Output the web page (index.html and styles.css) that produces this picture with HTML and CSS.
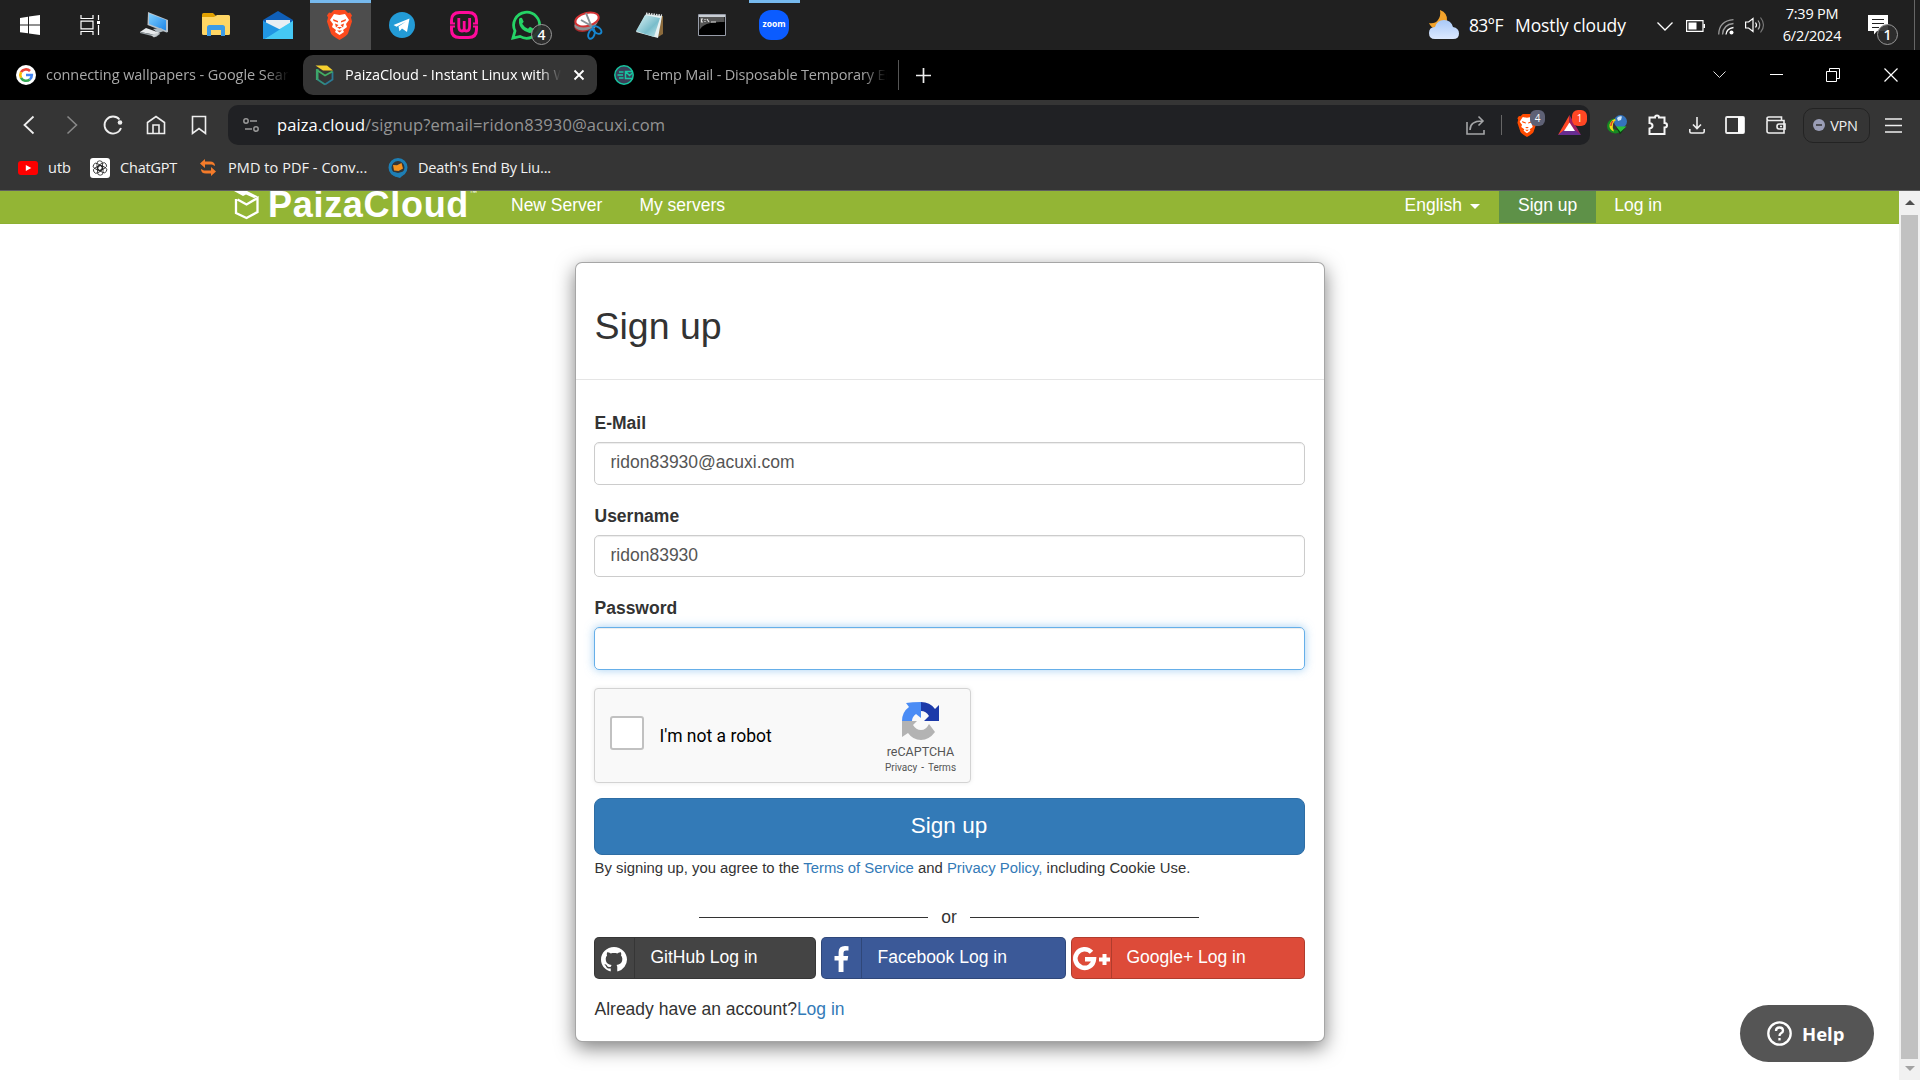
FILE: index.html
```html
<!DOCTYPE html>
<html lang="en">
<head>
<meta charset="utf-8">
<title>PaizaCloud - Instant Linux with Web browser</title>
<link rel="stylesheet" href="styles.css">
</head>
<body>
<div class="taskbar">
  <div class="task start"><svg width="20" height="20" viewBox="0 0 20 20"><path fill="#fff" d="M0 3l8-1.2V9.500H0zM9 1.600L20 0v9.500H9zM0 10.500h8v7.800L0 17.200zM9 10.500h11V20L9 18.500z"/></svg></div>
  <div class="task view"><svg width="21" height="20" viewBox="0 0 21 20" fill="none" stroke="#fff" stroke-width="1.200"><path d="M1 0v3.500h12V0M1 20v-3.500h12V20M1 6.200h12v7.600H1zM18.500 0v5M18.500 10v10"/><path fill="#fff" stroke="none" d="M17 6h3v3h-3z"/></svg></div>
  <div class="task"><svg width="28" height="27" viewBox="0 0 28 27"><defs><linearGradient id="pc" x2="1" y2="1"><stop stop-color="#7fd0ff"/><stop offset="1" stop-color="#1e86e8"/></linearGradient></defs><path fill="#b9c2c9" d="M8 0l20 8v12l-1.500.5L7.500 13z"/><path fill="url(#pc)" d="M9 1.500L26 8v10.500L9 12z"/><path fill="#aeb9c0" d="M13 17l8-1 3 3-6 2z"/><path fill="#e6e9eb" d="M6 16l14 5-4 2-16-3z"/><path fill="#9aa3a8" d="M0 20l16 3 4-2v1l-4 3L0 21z"/><path fill="#c9cfd2" d="M11 23l6-2 2 1-5 3.500z"/></svg></div>
  <div class="task"><svg width="28" height="24" viewBox="0 0 28 24"><path fill="#e2a100" d="M0 1.500Q0 0 1.500 0H11l3 3-2 2H0z"/><path fill="#ffd664" d="M0 4h12l3-2h11.500Q28 2 28 3.500v17q0 1.500-1.500 1.500h-25Q0 22 0 20.500z"/><path fill="#3c9be6" d="M5 14.500Q5 12 7.500 12h13q2.500 0 2.500 2.500V23h-4v-6H9v6H5z"/></svg></div>
  <div class="task"><svg width="30" height="28" viewBox="0 0 30 28"><path fill="#0f5fb8" d="M0 9L15 0l15 9v4H0z"/><path fill="#e9eef3" d="M3 9h24v14H3z"/><path fill="#2ea7ec" d="M0 10l15 10L0 28z"/><path fill="#50cff7" d="M30 10L0 28h30z"/><path fill="#2196e3" d="M0 10l18 9L2 28H0z"/><path fill="#45c8f4" d="M30 10v18H2z"/></svg></div>
  <div class="task active"><svg width="25" height="30" viewBox="0 0 25 30"><path fill="#fb4a1e" d="M7 0h11l3 3 2-.5 2 3-1 2 1 4-4 12q-1 2-8.500 6.500Q5 25.500 4 23.500L0 11.500l1-4-1-2 2-3L4 3z"/><path fill="#fff" d="M7 4l5.500 1L18 4l4 6-3 4 1 3-4 3 1 2-4.500 3L8 22l1-2-4-3 1-3-3-4z"/><path fill="#fb4a1e" d="M6 9l5 2v1.500L6.500 11zM19 9l-5 2v1.500l4.500-1.500zM10 17h5l-2.500 2zM8 13.500l3.500 1.500L9 17.500zM17 13.500L13.500 15l2.500 2.500zM10 20.500l2.500 2 2.500-2z"/></svg></div>
  <div class="task"><svg width="26" height="26" viewBox="0 0 26 26"><circle cx="13" cy="13" r="13" fill="#239bd6"/><path fill="#fff" d="M4.500 13L20.500 6.500 18 20l-5-3.500-2.500 2.800-1-4.800L17 9.500l-9.500 5.200z"/></svg></div>
  <div class="task"><svg width="28" height="28" viewBox="0 0 28 28" fill="none" stroke="#ff0a9b" stroke-width="3"><path d="M1.500 12V9.500q0-8 8-8h9q8 0 8 8V12M26.500 16v2.500q0 8-8 8h-9q-8 0-8-8V16"/><path stroke-width="2" d="M0 12.500h5M0 15.500h5M23 12.500h5M23 15.500h5"/><path stroke-width="2.800" d="M8.800 7v8.500q0 4.500 3.200 4.500 2.200 0 2.200-2.500V10v7.500q0 2.500 2.200 2.500 3.200 0 3.200-4.500V7"/></svg></div>
  <div class="task badge-host"><svg width="30" height="30" viewBox="0 0 30 30"><path fill="none" stroke="#25d366" stroke-width="2.800" d="M2 28l2-7A13 13 0 1 1 9 26.400z"/><path fill="#25d366" d="M8 9q1.500-2 3-1l1.700 3.800-1.500 2q2 3.500 5.800 5l2-2L23 19q0 4-4.500 4Q9 20.500 8 13z"/></svg><span class="sys-badge whats">4</span></div>
  <div class="task"><svg width="28" height="29" viewBox="0 0 28 29"><ellipse cx="11" cy="14" rx="11" ry="6.500" fill="#a92a2b" transform="rotate(-15 11 14)"/><ellipse cx="12" cy="12" rx="12" ry="7" fill="#8d9294" transform="rotate(-15 12 12)"/><ellipse cx="13" cy="8.500" rx="12" ry="6.500" fill="#fff" stroke="#d33334" stroke-width="2" transform="rotate(-15 13 8.500)"/><path stroke="#899095" stroke-width="2" d="M12 2l6 15M7 9l14 8"/><g fill="none" stroke="#1686d0" stroke-width="2"><ellipse cx="17.500" cy="23" rx="3" ry="5" transform="rotate(20 17.500 23)"/><ellipse cx="23" cy="19" rx="3" ry="5" transform="rotate(-55 23 19)"/></g></svg></div>
  <div class="task"><svg width="28" height="27" viewBox="0 0 28 27"><defs><linearGradient id="np" x2="1" y2="1"><stop stop-color="#dff4f6"/><stop offset=".6" stop-color="#79bdcb"/><stop offset="1" stop-color="#c5e6ea"/></linearGradient></defs><path fill="#8c6b3c" d="M24 4h3v18l-5 3z"/><path fill="#e6f1f2" d="M10 2l16 2-4 22L0 20z"/><path fill="url(#np)" d="M9 3l15 3-6 19L0 19z"/><path stroke="#dce1e3" stroke-width="2" stroke-dasharray="1.500 1" d="M10 1.500l16 2"/></svg></div>
  <div class="task"><svg width="28" height="22" viewBox="0 0 28 22"><path fill="#000" stroke="#979ca8" d="M.5.500h27v21H.5z"/><path fill="#c9ced4" d="M1 1h26v2H1z"/><path fill="#555" d="M1.500 3h25v5Q6 7 1.500 16z"/><path stroke="#ddd" stroke-width="1.200" fill="none" d="M5 5H3.500v3H5M7 5v1M7 7v1M9 5l2 3M13 8h5"/></svg></div>
  <div class="task zoom-app"><span class="zoom-logo">zoom</span></div>
  <div class="tray">
    <svg class="weather" width="30" height="30" viewBox="0 0 30 30"><defs><linearGradient id="cl" x2="0" y2="1"><stop stop-color="#a9c9f8"/><stop offset="1" stop-color="#dce9ff"/></linearGradient></defs><path fill="#f3a32b" d="M11 0q8 3 7 11-2 8-11 8-5-1-7-6 6 1 9-3t2-10z"/><path fill="url(#cl)" d="M6 29q-6 0-6-6t6-6q2-7 9-7t9 7q6 1 6 6.500T24 29z"/></svg>
    <span class="temp">83°F</span><span class="sky">Mostly cloudy</span>
    <svg class="t-chev" width="16" height="9" viewBox="0 0 16 9" fill="none" stroke="#fff" stroke-width="1.300"><path d="M.5.500L8 8l7.500-7.500"/></svg>
    <svg class="t-bat" width="19" height="12" viewBox="0 0 19 12"><path fill="none" stroke="#fff" stroke-width="1.200" d="M.6.600H17v10.800H.6z"/><path fill="#fff" d="M2.500 2.500h8v7h-8zM17.500 4H19v4h-1.500z"/></svg>
    <svg class="t-wifi" width="16" height="16" viewBox="0 0 16 16" fill="none" stroke="#999" stroke-width="1.300"><path d="M.7 15.500Q1 2 15.500.700M4.500 15.500Q5 5.500 15.500 4.500" /><path stroke="#fff" d="M8 15.500q.5-6 7.500-7"/><circle cx="13.500" cy="13.500" r="2" fill="#fff" stroke="none"/></svg>
    <svg class="t-vol" width="20" height="18" viewBox="0 0 20 18" fill="none" stroke="#fff" stroke-width="1.200"><path d="M.6 6h3L8 2.500v13L3.600 12h-3zM10.500 6.500q2 2.500 0 5"/><path stroke="#aaa" d="M13 4.500q3.500 4.500 0 9"/><path stroke="#777" d="M15.500 1.500q6 7.500 0 15"/></svg>
    <div class="clock"><span>7:39 PM</span><span>6/2/2024</span></div>
    <div class="notif badge-host"><svg width="20" height="20" viewBox="0 0 20 20"><path fill="#fff" d="M0 0h20v16H9l-3 3.500V16H0z"/><path stroke="#202020" stroke-width="1.200" d="M4 4.500h12M4 8.500h12M4 12.500h7"/></svg><span class="sys-badge note">1</span></div>
    <i class="peek"></i>
  </div>
</div>

<div class="tabs">
  <div class="tab first">
    <svg width="20" height="20" viewBox="0 0 20 20"><circle cx="10" cy="10" r="10" fill="#fff"/><g fill="none" stroke-width="2.600"><path stroke="#ea4335" d="M5 7.200A5.800 5.800 0 0 1 14 6"/><path stroke="#fbbc05" d="M5 12.800a6 6 0 0 1 0-5.600"/><path stroke="#34a853" d="M5 12.800a5.800 5.800 0 0 0 8.800 1.600"/><path stroke="#4285f4" d="M10 10h5.800q0 3-2 4.600"/></g></svg>
    <span class="tab-text w1">connecting wallpapers - Google Search</span>
  </div>
  <div class="tab current">
    <svg width="20" height="21" viewBox="0 0 20 21" fill="none" stroke-width="1.800"><path stroke="#3ca56c" stroke-width="2.600" d="M2.200 4v11"/><path stroke="#338f80" d="M2.500 14.500L10 19.500"/><path stroke="#2b7a94" d="M10 19.500l7.500-5V6.500"/><path stroke="#44ad62" d="M2.500 5.500L10 10.500l7.500-4"/><path fill="#f5cf2e" d="M.5.500h11.500l6 5H8z"/></svg>
    <span class="tab-text w2">PaizaCloud - Instant Linux with Web</span>
    <svg class="tab-x" width="10" height="10" viewBox="0 0 10 10" stroke="#fff" stroke-width="1.800"><path d="M.5.500l9 9M9.500.500l-9 9"/></svg>
  </div>
  <div class="tab third">
    <svg width="20" height="20" viewBox="0 0 20 20" fill="none" stroke="#17c6a0" stroke-width="1.500"><circle cx="10" cy="10" r="9.200" fill="#3b3f58"/><path d="M19 6.500h-7.500v7H19M11.500 6.500l4 4 3.500-3M5 7h4.500M3.500 10H9M5 13h4.500"/></svg>
    <span class="tab-text w3">Temp Mail - Disposable Temporary Email</span>
  </div>
  <i class="tab-sep"></i>
  <svg class="plus" width="15" height="15" viewBox="0 0 15 15" stroke="#eee" stroke-width="1.700"><path d="M7.500 0v15M0 7.500h15"/></svg>
  <div class="window-buttons">
    <svg width="13" height="8" viewBox="0 0 13 8" fill="none" stroke="#ddd"><path d="M.5.500l6 6 6-6"/></svg>
    <svg width="13" height="2" viewBox="0 0 13 2"><path fill="#fff" d="M0 0h13v1H0z"/></svg>
    <svg width="14" height="14" viewBox="0 0 14 14" fill="none" stroke="#fff"><path d="M.5 3.500h10v10H.5zM3.500 3.500v-3h10v10h-3"/></svg>
    <svg width="14" height="14" viewBox="0 0 14 14" stroke="#fff" stroke-width="1.200"><path d="M.5.500l13 13M13.500.500l-13 13"/></svg>
  </div>
</div>

<div class="toolbar">
  <div class="nav-icons">
    <svg width="12" height="18" viewBox="0 0 12 18" fill="none" stroke="#eee" stroke-width="1.800"><path d="M10.500.500L1.500 9l9 8.500"/></svg>
    <svg width="12" height="18" viewBox="0 0 12 18" fill="none" stroke="#888" stroke-width="1.600"><path d="M1.500.500l9 8.500-9 8.500"/></svg>
    <svg width="20" height="20" viewBox="0 0 20 20" fill="none" stroke="#eee" stroke-width="1.800"><path d="M16.500 4.500A8.500 8.500 0 1 0 18 13"/><circle cx="17" cy="7.500" r="2.300" fill="#eee" stroke="none"/></svg>
    <svg width="20" height="20" viewBox="0 0 20 20" fill="none" stroke="#eee" stroke-width="1.600"><path d="M1.500 7.500L10 1.500l8.500 6v11h-17zM7 18v-8h6v8"/></svg>
    <svg width="16" height="20" viewBox="0 0 16 20" fill="none" stroke="#eee" stroke-width="1.600"><path d="M1.500 18.500v-17h13v17L8 13.500z"/></svg>
  </div>
  <div class="address">
    <svg width="16" height="14" viewBox="0 0 16 14" fill="none" stroke="#999" stroke-width="1.500"><circle cx="3" cy="3" r="2.200"/><circle cx="13" cy="11" r="2.200"/><path d="M7 3h7M2 11h7"/></svg>
    <span class="url"><b>paiza.cloud</b>/signup?email=ridon83930@acuxi.com</span>
    <svg class="share" width="20" height="20" viewBox="0 0 20 20" fill="none" stroke="#a4a5a7" stroke-width="1.600"><path d="M1 7v12h17v-4M4 15q0-9 12-9M12.500 1.500L17 6l-4.500 4.500"/></svg>
    <i class="a-sep"></i>
    <div class="shield badge-host"><svg width="20" height="23" viewBox="0 0 25 30"><path fill="#ff4b00" d="M7 0h11l3 3 2-.5 2 3-1 2 1 4-4 12q-1 2-8.500 6.500Q5 25.500 4 23.500L0 11.500l1-4-1-2 2-3L4 3z"/><path fill="#fff" d="M7 4l5.500 1L18 4l4 6-3 4 1 3-4 3 1 2-4.500 3L8 22l1-2-4-3 1-3-3-4z"/><path fill="#ff4b00" d="M6 9l5 2v1.500L6.500 11zM19 9l-5 2v1.500l4.500-1.500zM10 17h5l-2.500 2zM10 20.500l2.500 2 2.500-2z"/></svg><span class="count gray">4</span></div>
    <div class="bat badge-host"><svg width="23" height="20" viewBox="0 0 23 20"><path fill="#ff4724" d="M11.500 0L0 20l11.500-7z"/><path fill="#9e1f63" d="M11.500 0L23 20l-11.500-7z"/><path fill="#662d91" d="M0 20l6-5h11l6 5z"/><path fill="#fff" d="M11.500 7.500L6 16h11z"/></svg><span class="count red">1</span></div>
  </div>
  <div class="extensions">
    <svg width="20" height="20" viewBox="0 0 20 20"><circle cx="13.500" cy="6.500" r="6.500" fill="#3473bd"/><path fill="#cfe6f6" d="M10 3q2-2.500 5-1.500l-1 3.500-3 1z"/><path fill="#168a22" d="M8 3Q0 5 0 11q0 6 8 7.500 4 0 6-3.500-8 1-9-4-.5-4 3-8z"/><path fill="#f4dd18" d="M7.500 4Q2 7 2.500 11.500 3 15 7 16.500 5 13 6 9q1-3 3-4z"/><path fill="#de3b2a" d="M5 6q-2 2-1.800 5h1.300q.3-3 2-5z"/><path fill="#0b3f10" d="M9 12h10l-6 7.500z"/><path fill="#2bc13b" d="M9 11.500h10.500l-6 5.500z"/></svg>
    <svg width="20" height="20" viewBox="0 0 20 20" fill="none" stroke="#f5f5f5" stroke-width="2"><path d="M1.500 2.500h5.500q0-2 2-2t2 2h5.500v5.500q2.500 0 2.500 2.200t-2.500 2.200V19h-15v-5.500q3-.5 3-2.800t-3-2.700z"/></svg>
    <svg width="16" height="17" viewBox="0 0 16 17" fill="none" stroke="#eee" stroke-width="1.600"><path d="M8 0v11M4 7.500l4 4 4-4M.8 12v2.500q0 1.500 1.500 1.500h11.400q1.500 0 1.500-1.500V12"/></svg>
    <svg width="20" height="18" viewBox="0 0 20 18"><rect x="1" y="1" width="18" height="16" rx="1" fill="none" stroke="#eee" stroke-width="1.800"/><path fill="#fff" d="M13 1h6v16h-6z"/></svg>
    <svg width="20" height="18" viewBox="0 0 20 18" fill="none" stroke="#eee" stroke-width="1.600"><path d="M1 4.500V15q0 2 2 2h15V4.500H3Q1 4.500 1 2.700T3 1h12.500v3M18 8h-5q-2 0-2 2.500t2 2.500h6V8zM14 10.500h2"/></svg>
    <div class="vpn"><svg width="12" height="12" viewBox="0 0 12 12"><circle cx="6" cy="6" r="6" fill="#9a9db5"/><path stroke="#333" stroke-width="1.500" d="M3 6h6"/></svg><span>VPN</span></div>
    <svg width="17" height="15" viewBox="0 0 17 15" stroke="#eee" stroke-width="1.500"><path d="M0 1h17M0 7.500h17M0 14h17"/></svg>
  </div>
</div>

<div class="bookmarks">
  <svg width="20" height="14" viewBox="0 0 20 14"><rect width="20" height="14" rx="3" fill="#f00"/><path fill="#fff" d="M7.800 4l5.500 3-5.500 3z"/></svg><span class="bm b1">utb</span>
  <svg width="20" height="20" viewBox="0 0 20 20"><rect width="20" height="20" rx="3" fill="#fff"/><g fill="none" stroke="#222" stroke-width=".8"><rect x="7" y="2.800" width="5.500" height="9.500" rx="2.700"/><rect x="7" y="2.800" width="5.500" height="9.500" rx="2.700" transform="rotate(60 10 10)"/><rect x="7" y="2.800" width="5.500" height="9.500" rx="2.700" transform="rotate(120 10 10)"/><rect x="7" y="2.800" width="5.500" height="9.500" rx="2.700" transform="rotate(180 10 10)"/><rect x="7" y="2.800" width="5.500" height="9.500" rx="2.700" transform="rotate(240 10 10)"/><rect x="7" y="2.800" width="5.500" height="9.500" rx="2.700" transform="rotate(300 10 10)"/></g></svg><span class="bm b2">ChatGPT</span>
  <svg width="16" height="17" viewBox="0 0 16 17" fill="#f47b2a"><path d="M0 4.500L5 0v2.500h5q5 0 5 4.500l-3-1.500H5V9zM16 12.500L11 17v-2.500H6q-5 0-5-4.500l3 1.500h7V8z"/></svg><span class="bm b3">PMD to PDF - Conv...</span>
  <svg width="20" height="20" viewBox="0 0 20 20"><circle cx="10" cy="9.500" r="8" fill="#353535" stroke="#1e7fb5" stroke-width="3"/><path fill="#1e7fb5" d="M2 13.500q5 0 8 1.500l7-2-3 5-2 2-5-1.500z"/><path fill="#f7931e" d="M5 7l4 .3L13.500 5l1.500 5.500-4.500 2.500-4.500-.5z"/></svg><span class="bm b4">Death's End By Liu...</span>
</div>

<div class="viewport">
  <div class="page">
    <nav class="site-nav">
      <div class="brand"><svg width="25" height="28" viewBox="0 0 25 28" fill="none" stroke="#fff" stroke-width="2.300"><path d="M2 8v14l10.500 5L23.500 21V7L12.500 13.500 3.500 8.500"/><path fill="#fff" stroke="none" d="M0 0h13l11 5.500-4 1.500L12 3.500 9 5z"/></svg><span>PaizaCloud</span><small>™</small></div>
      <a class="n1">New Server</a><a class="n2">My servers</a>
      <a class="lang">English<i class="caret"></i></a><a class="on">Sign up</a><a class="login">Log in</a>
    </nav>
    <main class="card">
      <h1>Sign up</h1>
      <form class="form">
        <label>E-Mail</label><div class="field">ridon83930@acuxi.com</div>
        <label>Username</label><div class="field">ridon83930</div>
        <label>Password</label><div class="field focus"></div>
        <div class="captcha">
          <i class="check"></i><span class="robot">I'm not a robot</span>
          <div class="rc"><svg width="38" height="38" viewBox="0 0 38 38"><path fill="#1c3aa9" d="M19 0q9 0 14 7l4-4v16H22l5-5q-3-5-8-5z"/><path fill="#4a8cf5" d="M19 0v16l-5-4q-4 3-4 7H0Q0 10 7 5L4 1q6-1 15-1z"/><path fill="#b3b3b3" d="M0 19h15l-4 4q3 5 8 5 5 0 8-6l6 8q-6 8-14 8Q11 38 6 31l-6 4z"/></svg><b>reCAPTCHA</b><small>Privacy<i>-</i>Terms</small></div>
        </div>
        <div class="submit">Sign up</div>
        <p class="terms">By signing up, you agree to the <a>Terms of Service</a> and <a>Privacy Policy,</a> including Cookie Use.</p>
        <div class="or"><i></i><span>or</span><i></i></div>
        <div class="social">
          <div class="gh"><span class="ic"><svg width="26" height="25" viewBox="0 0 16 16" preserveAspectRatio="none"><path fill="#fff" d="M8 0C3.580 0 0 3.580 0 8c0 3.540 2.290 6.530 5.470 7.590.4.070.55-.17.550-.38 0-.19-.01-.82-.01-1.490-2.010.37-2.530-.49-2.690-.94-.09-.23-.48-.94-.82-1.130-.28-.15-.68-.52-.01-.53.630-.01 1.080.58 1.230.82.720 1.210 1.870.87 2.330.66.070-.52.280-.87.510-1.070-1.780-.2-3.640-.89-3.640-3.950 0-.87.310-1.590.82-2.150-.08-.2-.36-1.020.080-2.120 0 0 .67-.21 2.200.82.640-.18 1.320-.27 2-.27s1.360.09 2 .27c1.530-1.040 2.200-.82 2.200-.82.440 1.100.16 1.920.080 2.120.51.56.82 1.270.82 2.150 0 3.070-1.870 3.750-3.650 3.950.29.25.54.730.54 1.480 0 1.070-.01 1.930-.01 2.200 0 .21.150.46.550.38A8.010 8.010 0 0 0 16 8c0-4.420-3.580-8-8-8z"/></svg></span><span>GitHub Log in</span></div>
          <div class="fb"><span class="ic"><svg width="15" height="26" viewBox="0 0 15 26"><path fill="#fff" d="M14.500.3v4.200H12q-2.500 0-2.500 2.300V10h4.700l-.7 4.500h-4V26H4.600V14.500H.5V10h4.100V6.300Q4.600 0 11 0q2.300 0 3.500.3z"/></svg></span><span>Facebook Log in</span></div>
          <div class="gp"><span class="ic"><svg width="37" height="24" viewBox="0 0 37 24"><path fill="none" stroke="#fff" stroke-width="4.600" d="M18.500 5.300A9.300 9.300 0 1 0 20.900 12.300H12"/><path fill="#fff" d="M29.500 7h4v3.500H37v4h-3.500V18h-4v-3.500H26v-4h3.500z"/></svg></span><span>Google+ Log in</span></div>
        </div>
        <p class="account">Already have an account?<a>Log in</a></p>
      </form>
    </main>
    <div class="help"><svg width="25" height="25" viewBox="0 0 25 25" fill="none" stroke="#fff" stroke-width="2.300"><circle cx="12.500" cy="12.500" r="11.200"/><path d="M9 10q0-3.500 3.500-3.500T16 9.700q0 1.500-2 2.600-1.500.8-1.500 2.700"/><path d="M12.500 17v2.400"/></svg><span>Help</span></div>
  </div>
  <div class="scrollbar"><i class="up"></i><i class="thumb"></i><i class="down"></i></div>
</div>
</body>
</html>
```
FILE: styles.css
```css
* { box-sizing: border-box; }
body { margin: 0; width: 1920px; height: 1080px; overflow: hidden; display: flex; flex-direction: column; background: #fff; font-family: "Liberation Sans", Arial, sans-serif; font-size: 17.5px; color: #333; }
svg { display: block; flex: none; overflow: visible; }
span, a { white-space: nowrap; }
.badge-host { position: relative; }

/* Taskbar */
.taskbar { flex: none; height: 50px; background: #202020; display: flex; color: #fff; font-family: "Open Sans", "Noto Sans", sans-serif; }
.task { width: 62px; flex: none; display: flex; align-items: center; justify-content: center; }
.task.start { width: 60px; }
.task.view { width: 63px; padding-right: 2px; }
.task.active { background: #4d4d4d; border-top: 3px solid #76b9ed; padding: 0 2px 3px 0; width: 61px; margin-left: 1px; }
.zoom-app { background: linear-gradient(#76b9ed, #76b9ed) center top / 51px 3px no-repeat; }
.zoom-logo { width: 30px; height: 30px; border-radius: 12px; background: #0b5cff; font: bold 8.500px/28px "Open Sans", sans-serif; text-align: center; }
.sys-badge { position: absolute; width: 21px; height: 21px; border: 1px solid #999; border-radius: 50%; background: rgba(45,45,45,.9); font: 600 14px/19px "Open Sans", sans-serif; text-align: center; }
.whats { left: 36px; top: 24px; }
.note { left: 9px; top: 24px; }
.tray { margin-left: auto; display: flex; align-items: center; width: 491px; font-size: 17.500px; }
.temp { margin-left: 10px; width: 46px; letter-spacing: -.7px; }
.sky { width: 111px; letter-spacing: -.1px; }
.t-chev { margin-left: 31px; margin-top: 2px; }
.t-bat { margin-left: 13px; margin-top: 1px; }
.t-wifi { margin-left: 13px; margin-top: 3px; }
.t-vol { margin-left: 11px; }
.clock { margin-left: 12px; width: 70px; display: flex; flex-direction: column; align-items: center; font-size: 14.500px; line-height: 22.500px; letter-spacing: -.25px; }
.notif { height: 50px; padding-top: 15px; margin-left: 21px; width: 20px; }
.peek { margin-left: auto; width: 1px; height: 50px; background: #666; margin-right: 5px; }

/* Tab strip */
.tabs { flex: none; height: 50px; background: #000; display: flex; align-items: center; font: 14.500px "Open Sans", "Noto Sans", sans-serif; color: #a8a8a8; }
.tab { height: 40px; display: flex; align-items: center; flex: none; }
.first { width: 303px; padding-left: 16px; }
.current { width: 294px; padding-left: 12px; background: #353535; border-radius: 10px; color: #fff; }
.third { width: 301px; padding-left: 17px; }
.tab-text { margin-left: 10px; padding-bottom: 2px; overflow: hidden; letter-spacing: -.07px; -webkit-mask-image: linear-gradient(to right, #000 90%, transparent); mask-image: linear-gradient(to right, #000 90%, transparent); }
.w1 { width: 243px; }
.w2 { width: 216px; }
.w3 { width: 243px; letter-spacing: -.17px; }
.tab-x { margin-left: 13px; }
.tab-sep { width: 1px; height: 30px; background: #555; }
.plus { margin-left: 17px; }
.window-buttons { margin-left: auto; width: 207px; display: flex; align-items: center; justify-content: space-between; padding-right: 22px; }

/* Toolbar */
.toolbar { flex: none; height: 50px; background: #353535; display: flex; align-items: center; }
.nav-icons { width: 228px; display: flex; align-items: center; padding-left: 23px; gap: 29px; }
.nav-icons svg:nth-child(2) { margin-left: 2px; }
.nav-icons svg:nth-child(3) { margin-left: -4px; }
.nav-icons svg:nth-child(4) { margin-left: -6px; }
.nav-icons svg:nth-child(5) { margin-left: -4px; }
.address { width: 1362px; height: 40px; background: #202124; border-radius: 10px; display: flex; align-items: center; padding-left: 15px; }
.url { margin-left: 18px; padding-bottom: 2px; font: 16.500px "Open Sans", "Noto Sans", sans-serif; letter-spacing: .11px; color: #949494; }
.url b { color: #fff; font-weight: 400; }
.share { margin-left: auto; }
.a-sep { width: 1px; height: 20px; background: #666; margin: 0 15px 0 15px; }
.bat { margin: 0 9px 0 21px; }
.count { position: absolute; top: -4px; width: 15px; height: 16px; border-radius: 6px; color: #fff; font: 10px/16px "Open Sans", sans-serif; text-align: center; }
.gray { left: 13px; background: #5e6175; }
.red { left: 14px; top: -5px; background: #ff4724; }
.extensions { flex: 1; display: flex; align-items: center; justify-content: space-between; padding: 0 18px 0 17px; }
.vpn { width: 67px; height: 35px; margin: 0 -6px 0 -4px; border: 1px solid #232323; border-radius: 10px; display: flex; align-items: center; gap: 5px; padding-left: 9px; color: #eee; font: 14.500px "Open Sans", sans-serif; letter-spacing: -.2px; }

/* Bookmarks */
.bookmarks { flex: none; height: 41px; background: #353535; border-bottom: 1px solid #5f5f5f; display: flex; align-items: center; padding: 0 0 5px 18px; font: 14.500px "Open Sans", "Noto Sans", sans-serif; color: #f2f2f2; }
.bm { margin-left: 10px; flex: none; }
.b1 { width: 42px; }
.b2 { width: 80px; letter-spacing: -.2px; }
.b3 { width: 160px; margin-left: 12px; letter-spacing: .06px; }
.b4 { letter-spacing: -.15px; }

/* Page */
.viewport { flex: 1; display: flex; overflow: hidden; }
.page { flex: 1; position: relative; }
.site-nav { height: 33px; background: #93b535; border-bottom: 1px solid #8db032; display: flex; align-items: center; color: #fff; padding: 0 237px 4px 234px; }
.brand { display: flex; align-items: center; width: 277px; height: 30px; }
.brand span { font: bold 36px/28px "Liberation Sans", Arial, sans-serif; margin-left: 9px; letter-spacing: .7px; }
.brand small { font-size: 8px; align-self: flex-start; line-height: 6px; }
.n2 { margin-left: 37px; }
.lang { margin-left: auto; display: flex; align-items: center; }
.caret { margin: 3px 0 0 8px; border: 5px solid transparent; border-top-color: #fff; border-bottom: 0; }
.on { margin: 0 18px -4px 19px; align-self: stretch; background: #5e9148; padding: 0 19px; line-height: 28px; }
.card { width: 750px; height: 780px; margin: 38px auto 0; border: 1px solid rgba(0,0,0,.35); border-radius: 7px; box-shadow: 0 6px 19px rgba(0,0,0,.5); background: #fff; }
h1 { margin: 0; height: 117px; padding: 43px 19px 0; border-bottom: 1px solid #e5e5e5; font-size: 37.500px; line-height: 41px; font-weight: 400; }
.form { padding: 31px 19px 0 18px; }
label { display: block; font-weight: 700; line-height: 24px; height: 31px; text-indent: 1px; }
.field { height: 42.500px; border: 1px solid #ccc; border-radius: 5px; padding: 0 16px; line-height: 39.500px; color: #555; margin-bottom: 19px; box-shadow: inset 0 1px 1px rgba(0,0,0,.075); }
.focus { margin-bottom: 18px; border-color: #66afe9; box-shadow: inset 0 1px 1px rgba(0,0,0,.075), 0 0 10px rgba(102,175,233,.6); }
.captcha { width: 377px; height: 95px; border: 1px solid #d3d3d3; border-radius: 4px; background: #f9f9f9; box-shadow: 0 0 5px rgba(0,0,0,.08); display: flex; align-items: center; font-family: Roboto, sans-serif; color: #000; }
.check { width: 34px; height: 34px; border: 2px solid #c1c1c1; border-radius: 3px; background: #fff; margin: 0 0 5px 15px; }
.robot { margin-left: 16px; padding-top: 1px; }
.rc { margin: 0 13px 0 auto; width: 72px; display: flex; flex-direction: column; align-items: center; color: #555; padding-top: 6px; }
.rc b { font-size: 12.500px; font-weight: 400; line-height: 18px; margin-top: 3px; }
.rc small { font-size: 10px; line-height: 13px; display: flex; gap: 4px; }
.submit { height: 57px; margin-top: 15px; background: #337ab7; border: 1px solid #2e6da4; border-radius: 8px; color: #fff; font-size: 22.500px; line-height: 54px; text-align: center; }
a { color: inherit; }
p { text-indent: 1px; }
p a { color: #337ab7; }
.terms { margin: 1px 0 0; font-size: 14.875px; line-height: 25px; }
.or { display: flex; align-items: center; justify-content: center; gap: 13px; line-height: 25px; margin-top: 24px; }
.or i { height: 1px; width: 229px; background: #333; }
.social { display: flex; gap: 5px; margin-top: 7px; color: #fff; }
.social > div { height: 42px; border: 1px solid rgba(0,0,0,.2); border-radius: 5px; display: flex; line-height: 38px; }
.ic { width: 40px; border-right: 1px solid rgba(0,0,0,.2); margin-right: 16px; display: flex; align-items: center; justify-content: center; padding-top: 3px; }
.gh { width: 222px; background: #444; }
.fb { width: 245px; background: #3b5998; }
.gp { width: 234px; background: #dd4b39; }
.gp .ic { margin-right: 15px; }
.account { margin: 18px 0 0; line-height: 25px; }
.help { position: absolute; right: 25px; bottom: 18px; width: 134px; height: 57px; border-radius: 29px; background: #555; color: #fff; display: flex; align-items: center; padding-left: 27px; font: bold 18.500px "Open Sans", sans-serif; }
.help span { margin-left: 10px; }
.scrollbar { width: 21px; background: #f1f1f1; display: flex; flex-direction: column; align-items: center; }
.up { margin-top: 9px; border: 5px solid transparent; border-top: 0; border-bottom-color: #505050; }
.thumb { width: 17px; height: 844px; margin-top: 10px; background: #c1c1c1; }
.down { margin-top: 7px; border: 5px solid transparent; border-bottom: 0; border-top-color: #a3a3a3; }
```
